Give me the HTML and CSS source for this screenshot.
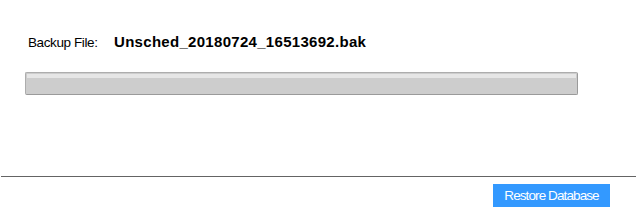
FILE: index.html
```html
<!DOCTYPE html>
<html lang="en">

<head>
  <meta charset="UTF-8">
  <title>Restore Database</title>
  <link rel="stylesheet" href="styles.css">
</head>

<body>
  <div class="restore-panel">
    <div class="file-row">
      <span class="file-label">Backup File:</span>
      <span class="file-name">Unsched_20180724_16513692.bak</span>
    </div>
    <div class="progress">
      <div class="progress-fill"></div>
    </div>
  </div>

  <div class="footer">
    <button class="restore-button">Restore Database</button>
  </div>
</body>

</html>
```

FILE: styles.css
```css
body {
  margin: 0;
  background-color: #FFF;
  color: #000;
  font-family: "Liberation Sans", Arial, sans-serif;
  width: 638px;
  height: 221px;
}

.restore-panel {
  height: 176px;
  padding-left: 25px;
  box-sizing: border-box;
  padding-top: 33px;
}

.file-row {
  display: flex;
  align-items: baseline;
  padding-left: 3px;
  height: 18px;
}

.file-label {
  font-size: 13.5px;
  letter-spacing: -0.4px;
  width: 86px;
}

.file-name {
  font-size: 15px;
  font-weight: bold;
  letter-spacing: 0.3px;
}

.progress {
  margin-top: 21px;
  width: 553px;
  height: 23px;
  box-sizing: border-box;
  border: 1px solid #adadad;
  border-right-color: #9a9a9a;
  border-bottom-color: #9a9a9a;
  border-radius: 2px;
  background-color: #cdcdcd;
  padding: 1px;
}

.progress-fill {
  height: 4px;
  background-color: #e6e6e6;
}

.footer {
  border-top: 1px solid #646464;
  margin: 0 2px 0 1px;
  display: flex;
  justify-content: flex-end;
  padding-top: 7px;
  padding-right: 26px;
}

.restore-button {
  width: 117px;
  height: 23px;
  border: none;
  background-color: #3399ff;
  color: #FFF;
  font-family: "Liberation Sans", Arial, sans-serif;
  font-size: 13.5px;
  letter-spacing: -0.9px;
  padding: 0;
}
```
